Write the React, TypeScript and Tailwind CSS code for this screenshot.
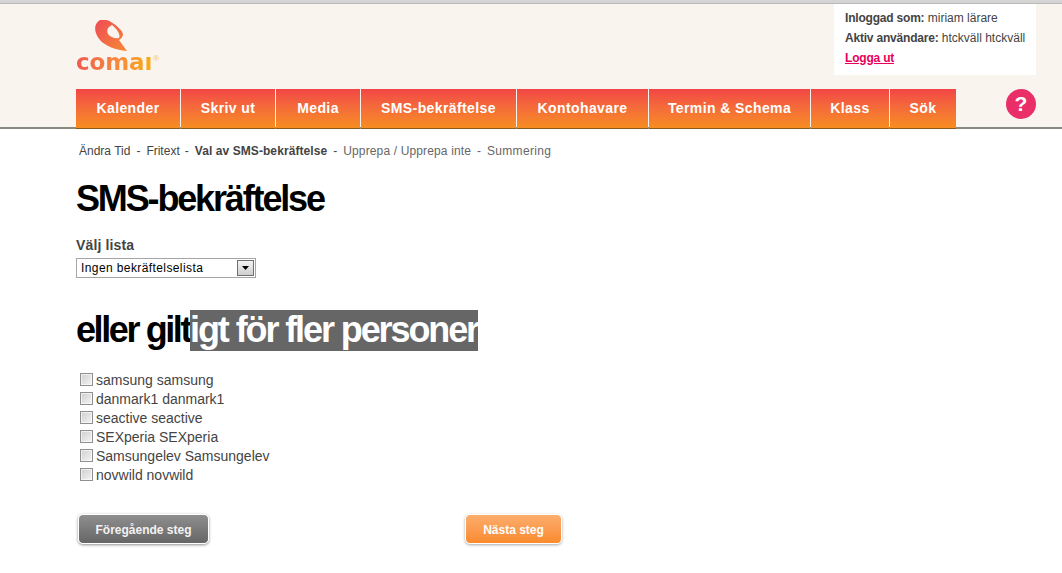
const navItems = [
  { label: 'Kalender', width: 'w-[104px]' },
  { label: 'Skriv ut', width: 'w-[94px]' },
  { label: 'Media', width: 'w-[84px]' },
  { label: 'SMS-bekräftelse', width: 'w-[155px]' },
  { label: 'Kontohavare', width: 'w-[131px]' },
  { label: 'Termin & Schema', width: 'w-[161px]' },
  { label: 'Klass', width: 'w-[78px]' },
  { label: 'Sök', width: 'w-[66px]' },
];

const people = [
  'samsung samsung',
  'danmark1 danmark1',
  'seactive seactive',
  'SEXperia SEXperia',
  'Samsungelev Samsungelev',
  'novwild novwild',
];

function Logo() {
  return (
    <div className="flex w-[82px] flex-col items-start">
      <svg width="34" height="34" viewBox="0 0 34 34" className="ml-[18px]">
        <defs>
          <linearGradient id="logoMark" x1="0" y1="0" x2="1" y2="1">
            <stop offset="0" stopColor="#ef4b55" />
            <stop offset="1" stopColor="#f58a35" />
          </linearGradient>
        </defs>
        <path
          d="M6 0 C10 -1 14 0 17 2 C22 5 28 10 29 14 C29 17 27 19 25 20 L33 31 C22 30 11 26 6 20 C0 13 -1 4 6 0 Z M18 5 C14 7 12 10 14 14 C16 17 21 19 25 18 C27 15 23 9 18 5 Z"
          fill="url(#logoMark)"
          fillRule="evenodd"
        />
      </svg>
      <div className="mt-[-2px] flex items-start">
        <span className="bg-gradient-to-r from-[#ef5a50] to-[#fbab08] bg-clip-text font-['DejaVu_Sans',sans-serif] text-[23px] leading-[20px] font-bold tracking-[-0.1px] text-transparent">
          comaı
        </span>
        <span className="ml-[1px] text-[8px] leading-[14px] text-[#f7c27a]">®</span>
      </div>
    </div>
  );
}

function Header() {
  return (
    <header className="border-b-2 border-[#8a8a84] bg-[#f9f4ee]">
      <div className="relative h-[123px] px-[76px]">
        <div className="pt-[16px]">
          <Logo />
        </div>
        <div className="absolute top-0 left-[834px] h-[71px] w-[202px] bg-white pt-[4px] pl-[11px] text-[12px] leading-[20px] text-[#444]">
          <p>
            <b className="tracking-[-0.2px]">Inloggad som:</b> miriam lärare
          </p>
          <p>
            <b className="tracking-[-0.2px]">Aktiv användare:</b> htckväll htckväll
          </p>
          <a href="#" className="font-bold tracking-[-0.2px] text-[#e8005a] underline">
            Logga ut
          </a>
        </div>
        <nav className="absolute top-[85px] left-[76px] z-10 flex h-[40px] gap-px">
          {navItems.map((item) => (
            <a
              key={item.label}
              href="#"
              className={`${item.width} flex h-full items-start justify-center border-b border-[#8a5a1c] bg-gradient-to-b from-[#f14545] to-[#f78d1e] pt-[10px] text-[14px] leading-[18px] font-bold tracking-[0.4px] text-white`}
            >
              {item.label}
            </a>
          ))}
        </nav>
        <div className="absolute top-[85px] left-[1006px] flex h-[30px] w-[30px] items-center justify-center rounded-full bg-[#ea2e68] text-[21px] font-bold text-white">
          ?
        </div>
      </div>
    </header>
  );
}

function Breadcrumb() {
  return (
    <div className="flex pl-[3px] text-[12px] leading-[16px] text-[#444]">
      <span>Ändra Tid</span>
      <span className="mx-[6px]">-</span>
      <span>Fritext</span>
      <span className="mr-[6px] ml-[5px]">-</span>
      <span className="font-bold tracking-[0.08px]">Val av SMS-bekräftelse</span>
      <span className="mx-[6px]">-</span>
      <span className="tracking-[0.14px] text-[#666]">Upprepa / Upprepa inte</span>
      <span className="mx-[6px] text-[#666]">-</span>
      <span className="tracking-[0.3px] text-[#666]">Summering</span>
    </div>
  );
}

export default function App() {
  return (
    <div className="min-h-[573px] overflow-hidden bg-white font-['Liberation_Sans',Arial,sans-serif]">
      <div className="h-[3px] bg-[#d4d4d4]" />
      <div className="h-px bg-[#b9bab8]" />
      <Header />

      <main className="px-[76px] pt-[14px]">
        <Breadcrumb />

        <h1 className="mt-[20px] text-[36px] leading-[40px] font-bold tracking-[-2.15px] text-black">
          SMS-bekräftelse
        </h1>

        <label className="mt-[18px] block text-[14px] leading-[16px] font-bold tracking-[0.15px] text-[#444]">Välj lista</label>
        <div className="mt-[5px] flex h-[20px] w-[180px] items-center justify-between border border-[#a5a5a5] bg-white pr-px pl-[4px] text-[12px] text-black">
          <span className="tracking-[0.4px]">Ingen bekräftelselista</span>
          <span className="flex h-[16px] w-[17px] items-center justify-center border border-[#707070] bg-gradient-to-b from-[#f4f4f4] to-[#cfcfcf]">
            <svg width="7" height="4" viewBox="0 0 7 4">
              <polygon points="0,0 7,0 3.5,4" fill="#000" />
            </svg>
          </span>
        </div>

        <h2 className="mt-[32px] h-[41px] text-[36px] leading-[39px] font-bold tracking-[-2.4px] text-black">
          eller gilt<span className="inline-block h-[41px] bg-[#666] tracking-[-2.1px] text-white">igt för fler personer</span>
        </h2>

        <ul className="mt-[20px] pl-[4px] text-[14px] leading-[19px] text-[#444]">
          {people.map((name) => (
            <li key={name} className="flex h-[19px] items-center gap-[3px]">
              <span className="mt-[-3px] h-[13px] w-[13px] border border-[#8e8f8f] bg-gradient-to-br from-[#cfcfcf] to-[#f4f4f4] shadow-[inset_0_0_0_1px_rgba(255,255,255,0.6)]" />
              <span>{name}</span>
            </li>
          ))}
        </ul>

        <div className="mt-[29px] flex items-start pl-[2px]">
          <button className="h-[30px] w-[131px] rounded-[5px] border border-white bg-gradient-to-b from-[#8f8f8f] to-[#666] pt-px text-[12px] font-bold text-[#f2f2f2] shadow-[0_1px_3px_rgba(0,0,0,0.45)]">
            Föregående steg
          </button>
          <button className="ml-[256px] h-[30px] w-[97px] rounded-[5px] border border-white bg-gradient-to-b from-[#fbad6c] to-[#fb8a2b] pt-px text-[12px] font-bold text-white shadow-[0_1px_3px_rgba(0,0,0,0.35)]">
            Nästa steg
          </button>
        </div>
      </main>
    </div>
  );
}
